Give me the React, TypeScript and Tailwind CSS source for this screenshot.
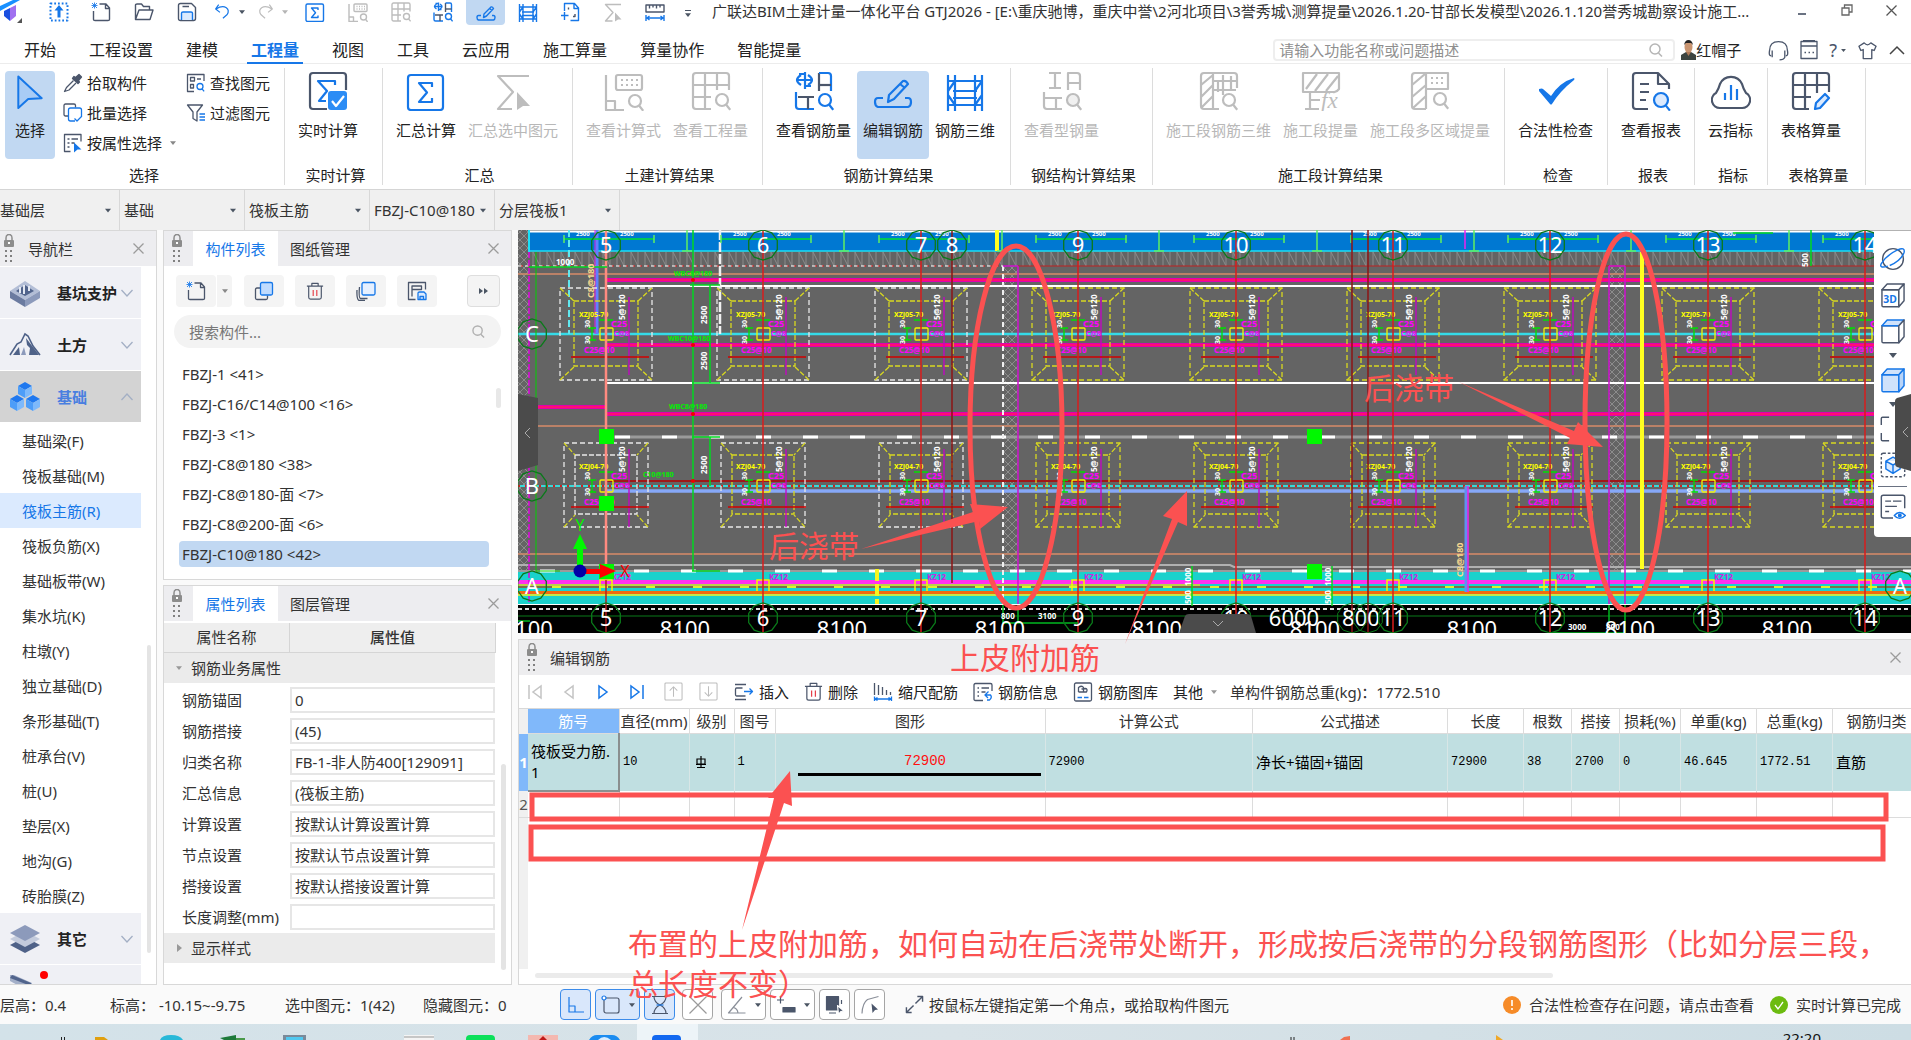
import React from "react";

const DARK = "#4b566b";
const BLUE = "#1677e8";
const GRAY = "#bdbdbd";
const RED = "#fb5151";

type IconProps = { name: string; className?: string; sw?: number; off?: boolean };

function Mag({ x, y, c, r = 6, fill = "none" }: { x: number; y: number; c: string; r?: number; fill?: string }) {
  return (
    <g stroke={c}>
      <circle cx={x} cy={y} r={r} fill={fill} />
      <path d={`M${x + r * 0.7} ${y + r * 0.8}l4 5`} />
    </g>
  );
}

function shapes(name: string, c: string, b: string): React.ReactNode {
  switch (name) {
    case "sigmaBox":
      return (
        <g stroke={b}>
          <rect x="2" y="4" width="35" height="35" rx="3" />
          <path d="M26 16v-4H13l8 9.500-8 9.500h13v-4" />
        </g>
      );
    case "realtime":
      return (
        <g>
          <path stroke={c} d="M19 38H5a3 3 0 0 1-3-3V5a3 3 0 0 1 3-3h30a3 3 0 0 1 3 3v14" />
          <path stroke={b} d="M27 14v-4H10l9 10-8 10h7" />
          <rect x="20" y="20" width="19" height="19" rx="3" fill="#2b8cf5" stroke="none" />
          <path d="M24 30l4 5 8-10" stroke="#fff" />
        </g>
      );
    case "sigmaCursor":
      return (
        <g stroke={c}>
          <path d="M36 5H5l15 16L5 38h14" />
          <path d="M24 21l13 14-7 0-6 4z" fill={c} stroke="none" />
        </g>
      );
    case "calcSearch":
      return (
        <g stroke={c}>
          <path d="M2 4v35h18M2 30h9v9" />
          <rect x="12" y="4" width="26" height="15" rx="2" />
          <path d="M17 9h17M17 14h17" strokeDasharray="2 3" />
          <Mag x={31} y={30} c={c} />
        </g>
      );
    case "gridSearch":
      return (
        <g stroke={c}>
          <path d="M20 38H5a3 3 0 0 1-3-3V5a3 3 0 0 1 3-3h30a3 3 0 0 1 3 3v14M2 14h36M2 26h18M14 2v36M26 2v17" />
          <Mag x={31} y={29} c={c} />
        </g>
      );
    case "rebarSearch":
      return (
        <g>
          <path stroke={b} d="M11 1v17M7 4q-8 5 0 10M14 4q8 5 0 10M2 9h17M5 3h5M12 15h5" />
          <path stroke={c} d="M25 20V2" />
          <path stroke={b} d="M25 2h9a3 3 0 0 1 3 3v15" />
          <path stroke={c} d="M25 14h12" />
          <path stroke={b} d="M2 21v14a3 3 0 0 0 3 3h15" />
          <path stroke={c} d="M4 26h16M14 26v12" />
          <Mag x={31} y={29} c={b} />
        </g>
      );
    case "steelSearch":
      return (
        <g stroke={c}>
          <path d="M7 2h12M7 17h12M13 2v15M26 19V2h9a3 3 0 0 1 3 3v14M26 12h12M2 21v14a3 3 0 0 0 3 3h15M2 27h18M14 27v11" />
          <Mag x={31} y={29} c={c} fill="#f0f0f0" />
        </g>
      );
    case "editRebar":
      return (
        <g stroke={b}>
          <path d="M10 27H5q-3 0-3 4t3 5h30q3-1 3-5t-3-4h-3" />
          <path d="M15 31l1-7 14-14q3-1 5 3L21 28zM27 13l5 4" />
        </g>
      );
    case "rebar3d":
      return (
        <g stroke={b}>
          <path d="M3 4v36M10 4v36M30 4v36M37 4v36M3 10h34M3 34h34M8 20h24M8 27h24M3 20l7-10M30 20l7-10M3 24l7 10M37 24l-7 10" />
        </g>
      );
    case "stage3d":
      return (
        <g stroke={c}>
          <path d="M20 38H5a3 3 0 0 1-3-3V5a3 3 0 0 1 3-3h30a3 3 0 0 1 3 3v12M14 2v36M2 14l12-10M2 26l12-12M2 37l12-12M19 9v12M32 5v14M15 10h22M15 19h22M24 4v20" />
          <Mag x={30} y={29} c={c} />
        </g>
      );
    case "stageFx":
      return (
        <g stroke={c}>
          <path d="M2 2h36v16q-3 4-6 3H2zM5 18L16 3M14 20L27 3M25 20L37 5M9 21v16M4 38h14M9 29h10" />
          <text x="20" y="37" fontSize="23" fontStyle="italic" fontFamily="Liberation Serif, serif" fill={c} stroke="none">fx</text>
        </g>
      );
    case "stageArea":
      return (
        <g stroke={c}>
          <path d="M16 38H5a3 3 0 0 1-3-3V5a3 3 0 0 1 3-3h33v16H16V2v36M2 14L15 3M2 26l14-12M3 37l13-12" />
          <path d="M21 7h14M21 12h14" strokeDasharray="2 3" />
          <Mag x={30} y={28} c={c} />
        </g>
      );
    case "check":
      return <path d="M3 18q3-1 4 0l8 7Q24 11 38 7q1 1 0 2Q24 20 16 33q-1 1-2 0L3 20z" fill={b} stroke="none" />;
    case "report":
      return (
        <g>
          <path stroke={c} d="M17 38H5a3 3 0 0 1-3-3V5a3 3 0 0 1 3-3h22l11 11v5M27 3v10h10M9 13h9M9 21h9M9 29h6" />
          <Mag x={30} y={29} c={b} r={7} fill="#dbeafe" />
        </g>
      );
    case "cloud":
      return (
        <g>
          <path stroke={c} d="M9 37a8 8 0 0 1-4-15Q8 17 9 13a12 12 0 0 1 22 0q1 4 4 9a8 8 0 0 1-4 15z" />
          <path stroke={b} d="M14 22v7M20 14v15M26 18v11" />
        </g>
      );
    case "gridPencil":
      return (
        <g>
          <path stroke={c} d="M18 38H5a3 3 0 0 1-3-3V5a3 3 0 0 1 3-3h30a3 3 0 0 1 3 3v16M2 14h36M2 26h18M14 2v36M26 2v20" />
          <path stroke={b} fill="#dbeafe" d="M24 38l1-6 9-9 4 4-9 10z" />
        </g>
      );
    case "pointer":
      return <path d="M7 4l26 24-15 1-11 10z" stroke={b} fill="#a9ccf5" />;
    case "picker":
      return (
        <g stroke={c}>
          <path d="M25 9l7-6 5 5-6 7 2 3-3 3L19 11l3-4z" fill={c} />
          <path d="M21 15L7 29l-4 8 9-3 14-14" />
        </g>
      );
    case "batch":
      return (
        <g>
          <path stroke={c} d="M10 26H5a3 3 0 0 1-3-3V5a3 3 0 0 1 3-3h17a3 3 0 0 1 3 3v4" />
          <path stroke={b} d="M24 36H15q-4 0-4-4V14q0-4 4-4h18q4 0 4 4v14M23 31l5 5 9-9" />
        </g>
      );
    case "attrSelect":
      return (
        <g>
          <path stroke={c} d="M15 37H3V3h33v14M9 12h4M17 12h13M9 20h4M17 20h6M9 28h4" />
          <path d="M22 19l15 14h-8l-7 6z" fill={b} stroke="none" />
        </g>
      );
    case "findElem":
      return (
        <g>
          <path stroke={c} d="M16 37H3V3h33v13M9 9h8v7H9zM9 23h6v7H9zM22 12h8" />
          <Mag x={28} y={27} c={b} />
        </g>
      );
    case "filter":
      return (
        <g>
          <path stroke={c} d="M3 4h30L22 18v18l-8-5V18z" />
          <path stroke={b} d="M27 22h11M27 28h11M27 34h11" />
        </g>
      );
    case "dashUp":
      return (
        <g stroke={b}>
          <rect x="3" y="3" width="34" height="34" strokeDasharray="3.5 4" strokeWidth="4" />
          <path d="M20 6l9 11h-6v14h-6V17h-6z" fill={b} stroke="none" />
        </g>
      );
    case "new":
      return (
        <g>
          <path stroke={c} d="M17 4h13l7 8v23q0 2-3 2H8q-3 0-3-2V18M29 5v8h8" />
          <path stroke={b} d="M2 2l10 10M12 2L2 12M7 1v12M1 7h12" strokeWidth="1.7" />
        </g>
      );
    case "open":
      return <path stroke={c} d="M3 35V6q0-2 3-2h9l4 5h12v7M3 35l7-19h28l-6 19z" />;
    case "save":
      return (
        <g>
          <path stroke={c} d="M3 7q0-4 4-4h22l8 8v22q0 4-4 4H7q-4 0-4-4zM11 9h13" />
          <path stroke={b} d="M9 36V22q0-2 3-2h16q3 0 3 2v14" fill="#dbeafe" />
        </g>
      );
    case "undo":
      return <path stroke={b} d="M11 4L4 14l10 8M5 14q14-9 24-3 8 6 2 16l-10 9" />;
    case "redo":
      return <path stroke={c} d="M29 4l7 10-10 8M35 14Q21 5 11 11q-8 6-2 16l10 9" />;
    case "frameAdd":
      return (
        <g stroke={b}>
          <path d="M9 18V3h20l8 9v25H21M28 3v10h9M2 27h15M9 20v16" />
          <path d="M17 15v-4M26 29h4v-5" stroke={c} />
        </g>
      );
    case "ruler":
      return (
        <g>
          <path stroke={c} d="M2 6h36v14H2zM9 6v7M16 6v5M23 6v7M30 6v5" />
          <path stroke={b} d="M2 26v12M38 26v12M4 32h32M9 28l-5 4 5 4M31 28l5 4-5 4" />
        </g>
      );
    case "copy":
      return (
        <g>
          <path stroke={c} d="M12 14H6q-3 0-3 3v17q0 3 3 3h18q3 0 3-3v-5" />
          <rect x="13" y="3" width="24" height="25" rx="3" stroke={b} fill="#bfdbfe" />
        </g>
      );
    case "layers":
      return (
        <g>
          <path stroke={c} d="M7 12q-2 22 2 23h14M2 18q-1 18 4 21h12" />
          <rect x="12" y="3" width="26" height="25" rx="3" stroke={b} fill="#e6f0ff" />
        </g>
      );
    case "trash":
      return (
        <g>
          <path stroke={c} d="M2 9h36M13 8V3h14v5M6 9v25q0 4 4 4h20q4 0 4-4V9" />
          <path stroke="#e5404a" d="M16 18v13M24 18v13" />
        </g>
      );
    case "archive":
      return (
        <g>
          <path stroke={c} d="M17 37H3V3h34v14M10 31V10h19v7H10" />
          <path stroke={b} fill="#dbeafe" d="M22 37V24q0-2 3-2h9l4 4v11zM26 37v-6h7v6" />
        </g>
      );
    case "insert":
      return (
        <g>
          <path stroke={c} d="M2 5h22M2 35h22M17 12H5q-2 0-2 3v10q0 3 2 3h18" />
          <path stroke={b} d="M20 19h17M31 13l6 6-6 6" />
        </g>
      );
    case "scale":
      return (
        <g>
          <path stroke={c} d="M3 2v24M11 6v20M19 10v16M27 16v10M35 20v6" />
          <path stroke={b} d="M3 29v9M37 29v9M4 34h32M9 31l-5 3 5 3M31 31l5 3-5 3" />
        </g>
      );
    case "info":
      return (
        <g>
          <path stroke={c} d="M20 37H5q-3 0-3-3V6q0-3 3-3h30q3 0 3 3v12M9 12h3M17 12h15M9 20h3M17 20h8M9 28h3" />
          <path stroke={b} d="M31 19l-7 7h11q4 5-2 10h-5M24 26l6 6" />
        </g>
      );
    case "library":
      return (
        <g>
          <rect x="3" y="2" width="34" height="36" rx="3" stroke={c} />
          <path stroke={c} d="M11 20V11q7-5 10 0v9M11 20h16q3-6-2-7l-8 1" />
          <path stroke={b} d="M9 31h9M22 31h9" />
        </g>
      );
    case "orbit":
      return (
        <g>
          <circle cx="20" cy="20" r="16" stroke={c} />
          <path stroke={b} d="M12 31Q-2 35 2 27 10 14 27 6q12-5 10 4-5 13-22 20" />
        </g>
      );
    case "cube":
    case "cubeTop":
    case "cubeFull":
    case "cube3d":
      return (
        <g stroke={name === "cubeFull" ? b : c}>
          <path d="M3 12h26v26H5q-2 0-2-2z" fill={name === "cubeFull" ? "#cfe2fb" : "#fff"} />
          <path d="M3 12l8-9h26l-8 9z" stroke={name === "cube3d" ? c : b} fill={name === "cube3d" ? "#fff" : "#cfe2fb"} />
          <path d="M37 3v26l-8 9V12z" fill={name === "cubeFull" ? "#b9d4f8" : "#fff"} />
          {name === "cube3d" && (
            <text x="5" y="33" fontSize="16" fontWeight="700" fill={b} stroke="none" fontFamily="Noto Sans, sans-serif">3D</text>
          )}
        </g>
      );
    case "corners":
      return <path stroke={c} d="M14 2H4q-2 0-2 2v10M2 26v10q0 2 2 2h10M26 2h10q2 0 2 2v10M38 26v10q0 2-2 2H26" />;
    case "cubeDash":
      return (
        <g>
          <rect x="2" y="2" width="36" height="36" rx="3" stroke={c} strokeDasharray="4 3" />
          <path stroke={b} fill="#dbeafe" d="M20 8l11 6v12l-11 7-11-7V14zM9 14l11 6 11-6M20 20v12" />
        </g>
      );
    case "listEye":
      return (
        <g>
          <path stroke={c} d="M20 37H5q-3 0-3-3V5q0-3 3-3h30q3 0 3 3v17M8 11h9M20 11h13M8 19h18M8 27h6" />
          <path stroke={b} d="M22 33q8-9 17 0-9 9-17 0z" />
          <circle cx="30.500" cy="33" r="2" fill={b} stroke={b} />
        </g>
      );
    case "ortho":
      return <path stroke={b} d="M6 4v30h30M6 22h12v12" />;
    case "snap":
      return (
        <g>
          <rect x="6" y="6" width="30" height="30" rx="4" stroke={c} />
          <circle cx="6" cy="6" r="4" stroke={b} fill="#fff" />
        </g>
      );
    case "hourglass":
      return (
        <g>
          <path stroke={c} d="M4 3h32M4 37h32M8 3q0 11 12 17Q8 26 8 37M32 3q0 11-12 17 12 6 12 17" />
          <path stroke={b} d="M13 20h14" />
        </g>
      );
    case "cross":
      return <path stroke="#9a9a9a" d="M3 3l34 34M37 3L3 37" />;
    case "angle":
      return (
        <g stroke="#8a8f99">
          <path d="M30 4L3 36h34M13 25q8 2 9 11" />
        </g>
      );
    case "dyn":
      return (
        <g stroke={c}>
          <path d="M2 10h14M9 3v14" />
          <rect x="14" y="25" width="24" height="9" fill={c} />
        </g>
      );
    case "select3":
      return (
        <g stroke={c}>
          <path d="M3 3h24v27H3z" fill={c} />
          <path d="M33 10v8M8 36h14" />
          <path d="M25 21l13 11-6 1-5 6z" fill={c} stroke="#fff" />
        </g>
      );
    case "poly":
      return (
        <g stroke="#8a8f99">
          <path d="M4 37Q5 16 15 9l22-6" />
          <path d="M23 17l13 12-6 1-5 6z" fill={c} stroke="none" />
        </g>
      );
    case "expand":
      return <path stroke={DARK} d="M22 18L37 3M26 3h11v11M18 22L3 37M3 26v11h11" />;
    case "headset":
      return <path stroke={c} d="M6 30Q1 30 3 20q0-17 17-17t17 17q2 10-3 10M8 20v13M32 20v13q-2 5-10 5" />;
    case "calc":
      return <path stroke={c} d="M4 3h32v34H4zM4 12h32M11 25h3M19 25h3M27 25h3M8 1h24" />;
    case "shirt":
      return <path stroke={c} d="M13 4L2 11l4 9 5-2v19h18V18l5 2 4-9-11-7q-7 8-14 0z" />;
    case "up":
      return (
        <g stroke={GRAY}>
          <rect x="2" y="2" width="36" height="36" rx="2" />
          <path d="M20 31V10M12 18l8-8 8 8" />
        </g>
      );
    case "down":
      return (
        <g stroke={GRAY}>
          <rect x="2" y="2" width="36" height="36" rx="2" />
          <path d="M20 9v21M12 22l8 8 8-8" />
        </g>
      );
    default:
      return null;
  }
}

function Icon({ name, className = "size-5", sw = 2.2, off = false }: IconProps) {
  const c = off ? GRAY : DARK;
  const b = off ? GRAY : BLUE;
  return (
    <svg viewBox="0 0 40 40" className={`${className} shrink-0`} fill="none" strokeWidth={sw} strokeLinejoin="round" aria-hidden="true">
      {shapes(name, c, b)}
    </svg>
  );
}

function Caret({ className = "w-2 h-[5px]", color = "#4b5563" }: { className?: string; color?: string }) {
  return (
    <svg viewBox="0 0 8 5" className={`${className} shrink-0`} aria-hidden="true">
      <path d="M0 0h8L4 5z" fill={color} />
    </svg>
  );
}

function CloseX({ className = "size-[11px]", color = "#9b9b9b" }: { className?: string; color?: string }) {
  return (
    <svg viewBox="0 0 11 11" className={className} stroke={color} strokeWidth="1.3" aria-hidden="true">
      <path d="M.5.5l10 10M10.500.5l-10 10" />
    </svg>
  );
}

function Chevron({ up = false, color = "#a3afc4" }: { up?: boolean; color?: string }) {
  return (
    <svg viewBox="0 0 12 8" className="h-2 w-3 shrink-0" fill="none" stroke={color} strokeWidth="1.3" aria-hidden="true">
      <path d={up ? "M.5 7L6 1l5.500 6" : "M.5 1L6 7l5.500-6"} />
    </svg>
  );
}

function Grip() {
  return (
    <svg viewBox="0 0 12 30" className="h-[30px] w-3 shrink-0" aria-hidden="true">
      <path d="M3 7V4q0-3.500 3-3.500T9 4v3" fill="none" stroke="#8c8c8c" strokeWidth="1.500" />
      <rect x="1" y="6" width="10" height="7" rx="1" fill="#8c8c8c" />
      <rect x="5" y="8" width="2" height="2" fill="#fff" />
      {[16, 21, 26].map((y) => (
        <g key={y} fill="#808080">
          <rect x="2" y={y} width="2" height="2" />
          <rect x="7" y={y} width="2" height="2" />
        </g>
      ))}
    </svg>
  );
}

/* ---------- title bar ---------- */

const quick: { n: string; off?: boolean; w: string; active?: boolean; caret?: boolean }[] = [
  { n: "dashUp", w: "w-[42px]" },
  { n: "new", w: "w-[42px]" },
  { n: "open", w: "w-[43px]" },
  { n: "save", w: "w-[43px]" },
  { n: "undo", w: "w-[43px]", caret: true },
  { n: "redo", w: "w-[43px]", off: true, caret: true },
  { n: "sigmaBox", w: "w-[42px]" },
  { n: "calcSearch", w: "w-[43px]", off: true },
  { n: "gridSearch", w: "w-[43px]", off: true },
  { n: "rebarSearch", w: "w-[42px]" },
  { n: "editRebar", w: "w-[43px]", active: true },
  { n: "rebar3d", w: "w-[42px]" },
  { n: "frameAdd", w: "w-[42px]" },
  { n: "sigmaCursor", w: "w-[43px]", off: true },
  { n: "ruler", w: "w-[42px]" },
];

function TitleBar() {
  return (
    <header className="flex h-[25px] shrink-0 items-start overflow-hidden">
      <svg viewBox="0 0 24 25" className="mr-[14px] h-[25px] w-6 shrink-0" aria-hidden="true">
        <path d="M0 6L13 0h7L0 11z" fill="#1890ff" />
        <path d="M4 11l6-3v13l-6-5z" fill="#1a4fe0" />
        <path d="M10 8l6-3v11l-6 5z" fill="#a070f0" />
        <path d="M22 18v5h-5z" fill="#555" />
      </svg>
      {quick.map((q) => (
        <div key={q.n} className={`${q.w} flex h-[25px] shrink-0 justify-center`}>
          <button
            aria-label={q.n}
            className={`flex h-[25px] w-[39px] items-center justify-center gap-2 rounded-b pb-0.5 ${q.active ? "bg-[#c1d8f2]" : ""}`}
          >
            <Icon name={q.n} off={q.off} sw={2.8} className={q.caret ? "size-[17px]" : "size-5"} />
            {q.caret && <Caret className="h-1 w-1.5" color={q.off ? "#b5b5b5" : "#4b5563"} />}
          </button>
        </div>
      ))}
      <button aria-label="更多" className="mt-2.5 ml-1 flex w-4 flex-col items-center gap-0.5">
        <span className="h-px w-1.5 bg-gray-600" />
        <Caret className="h-1 w-1.5" />
      </button>
      <h1 className="ml-4 min-w-0 flex-1 truncate leading-[22px] text-[#333]">
        广联达BIM土建计量一体化平台 GTJ2026 - [E:\重庆驰博，重庆中誉\2河北项目\3誉秀城\测算提量\2026.1.20-甘部长发模型\2026.1.120誉秀城勘察设计施工...
      </h1>
      <div className="ml-4 flex shrink-0 items-center gap-[33px] pt-1 pr-[14px]">
        <button aria-label="最小化" className="flex h-3 w-3 items-end justify-center pb-px">
          <span className="h-0.5 w-2 bg-gray-500" />
        </button>
        <button aria-label="还原">
          <svg viewBox="0 0 12 12" className="size-3" fill="none" stroke="#666" strokeWidth="1.300" aria-hidden="true">
            <path d="M3.500 3.500V1H11v7H8.500M1 4h7v7H1z" />
          </svg>
        </button>
        <button aria-label="关闭">
          <CloseX color="#555" />
        </button>
      </div>
    </header>
  );
}

const menu = ["开始", "工程设置", "建模", "工程量", "视图", "工具", "云应用", "施工算量", "算量协作", "智能提量"];

function MenuRow() {
  return (
    <div className="flex h-[39px] shrink-0 items-end justify-between border-b border-[#ececec]">
      <nav className="flex gap-[25px] pl-5">
        {menu.map((m) => (
          <button
            key={m}
            className={`-mb-px h-[30px] border-b-2 px-1 pt-1 text-base leading-6 ${m === "工程量" ? "border-[#1677e8] font-bold text-[#1677e8]" : "border-transparent text-[#222]"}`}
          >
            {m}
          </button>
        ))}
      </nav>
      <div className="flex h-[30px] items-center pt-1 pr-1.5">
        <label className="flex h-[22px] w-[402px] items-center justify-between rounded-sm border-2 border-[#eeeeee] pr-2.5 pl-1">
          <input aria-label="功能搜索" placeholder="请输入功能名称或问题描述" className="w-full outline-none placeholder:text-[#8f8f8f]" />
          <svg viewBox="0 0 14 14" className="size-[14px] shrink-0" fill="none" stroke="#b5b5b5" strokeWidth="1.500" aria-hidden="true">
            <circle cx="6" cy="6" r="5" />
            <path d="M9.500 10l3.500 3.500" />
          </svg>
        </label>
        <svg viewBox="0 0 15 20" className="ml-1.5 h-5 w-[15px]" aria-hidden="true">
          <path d="M0 20v-5l5-3h5l5 3v5z" fill="#3d4440" />
          <ellipse cx="7.500" cy="7" rx="4" ry="6" fill="#c99470" />
          <path d="M3 5Q4 0 7.500 0T12 5L10 3H5z" fill="#222" />
          <path d="M5 12h5l-2.500 4z" fill="#b07a58" />
        </svg>
        <span className="text-[#222]">红帽子</span>
        <button aria-label="客服" className="ml-[27px]"><Icon name="headset" className="size-[21px]" sw={2.5} /></button>
        <button aria-label="计算器" className="ml-[10px]"><Icon name="calc" className="size-5" sw={2.6} /></button>
        <button aria-label="帮助" className="ml-[10px] flex items-center gap-1 text-lg text-[#4b566b]">?<Caret className="h-[3px] w-[5px]" /></button>
        <button aria-label="换肤" className="ml-[12px]"><Icon name="shirt" className="size-[19px]" sw={2.8} /></button>
        <button aria-label="收起" className="ml-3">
          <svg viewBox="0 0 16 10" className="h-2.5 w-4" fill="none" stroke="#444" strokeWidth="1.500" aria-hidden="true"><path d="M1 9l7-7 7 7" /></svg>
        </button>
      </div>
    </div>
  );
}

/* ---------- ribbon ---------- */

type Big = { n: string; t: string; off?: boolean; active?: boolean };
const groups: { title: string; w: string; items: Big[] }[] = [
  { title: "实时计算", w: "w-[98px]", items: [{ n: "realtime", t: "实时计算" }] },
  { title: "汇总", w: "w-[190px]", items: [{ n: "sigmaBox", t: "汇总计算" }, { n: "sigmaCursor", t: "汇总选中图元", off: true }] },
  { title: "土建计算结果", w: "w-[190px]", items: [{ n: "calcSearch", t: "查看计算式", off: true }, { n: "gridSearch", t: "查看工程量", off: true }] },
  { title: "钢筋计算结果", w: "w-[248px]", items: [{ n: "rebarSearch", t: "查看钢筋量" }, { n: "editRebar", t: "编辑钢筋", active: true }, { n: "rebar3d", t: "钢筋三维" }] },
  { title: "钢结构计算结果", w: "w-[142px]", items: [{ n: "steelSearch", t: "查看型钢量", off: true }] },
  { title: "施工段计算结果", w: "w-[352px]", items: [{ n: "stage3d", t: "施工段钢筋三维", off: true }, { n: "stageFx", t: "施工段提量", off: true }, { n: "stageArea", t: "施工段多区域提量", off: true }] },
  { title: "检查", w: "w-[103px]", items: [{ n: "check", t: "合法性检查" }] },
  { title: "报表", w: "w-[87px]", items: [{ n: "report", t: "查看报表" }] },
  { title: "指标", w: "w-[73px]", items: [{ n: "cloud", t: "云指标" }] },
  { title: "表格算量", w: "w-[98px]", items: [{ n: "gridPencil", t: "表格算量" }] },
];

function SmallBtn({ n, t, caret }: { n: string; t: string; caret?: boolean }) {
  return (
    <button className="flex h-[30px] items-center gap-1 text-[#222]">
      <Icon name={n} className="size-5" sw={2.6} />
      {t}
      {caret && <Caret className="ml-1 h-1 w-1.5" color="#888" />}
    </button>
  );
}

function Ribbon() {
  return (
    <section className="flex h-[126px] shrink-0 overflow-hidden border-b border-[#d5d5d5] py-1">
      <div className="flex w-[285px] shrink-0 flex-col border-r border-[#dcdcdc]">
        <div className="flex h-[91px]">
          <button className="mt-[3px] ml-[5px] flex h-[88px] w-[50px] flex-col items-center rounded bg-[#c1d8f2] pt-0.5 text-[#222]">
            <Icon name="pointer" className="size-9" />
            <span className="mt-[11px] leading-5">选择</span>
          </button>
          <div className="ml-2 flex flex-col">
            <SmallBtn n="picker" t="拾取构件" />
            <SmallBtn n="batch" t="批量选择" />
            <SmallBtn n="attrSelect" t="按属性选择" caret />
          </div>
          <div className="ml-2.5 flex flex-col">
            <SmallBtn n="findElem" t="查找图元" />
            <SmallBtn n="filter" t="过滤图元" />
          </div>
        </div>
        <span className="mt-1.5 pl-1 text-center leading-5 text-[#222]">选择</span>
      </div>
      {groups.map((g) => (
        <div key={g.title} className={`${g.w} flex shrink-0 flex-col border-r border-[#dcdcdc] pt-[3px]`}>
          <div className="flex pl-[7px]">
            {g.items.map((it) => (
              <button
                key={it.t}
                disabled={it.off}
                className={`flex h-[88px] shrink-0 flex-col items-center rounded px-1.5 whitespace-nowrap ${it.active ? "bg-[#c1d8f2]" : ""} ${it.off ? "text-[#b8b8b8]" : "text-[#222]"}`}
              >
                <Icon name={it.n} off={it.off} className="size-10" />
                <span className="mt-[9px] leading-5">{it.t}</span>
              </button>
            ))}
          </div>
          <span className="mt-1.5 pl-1 text-center leading-5 text-[#222]">{g.title}</span>
        </div>
      ))}
    </section>
  );
}

function SelectorBar() {
  const items = ["基础层", "基础", "筏板主筋", "FBZJ-C10@180", "分层筏板1"];
  return (
    <section className="flex h-10 shrink-0 bg-[#f0f0f0]">
      {items.map((t, i) => (
        <div key={t} className={`relative border-r border-[#d8d8d8] ${i === 0 ? "w-[120px]" : "w-[125px]"}`}>
          <select aria-label={t} className={`h-full w-full appearance-none truncate bg-transparent pr-4 text-[#333] outline-none ${i === 0 ? "pl-0" : "pl-1"}`}>
            <option>{t}</option>
          </select>
          <span className="pointer-events-none absolute top-[18px] right-2">
            <Caret className="h-[5px] w-1.5" />
          </span>
        </div>
      ))}
    </section>
  );
}

/* ---------- navigation ---------- */

function NavHead({ t, icon, open }: { t: string; icon: React.ReactNode; open?: boolean }) {
  return (
    <button className={`mb-px flex h-[51px] w-[141px] shrink-0 items-center pl-[9px] font-bold ${open ? "bg-[#d3d3d3] text-[#4a7fe0]" : "bg-[#eff0f5] text-[#222]"}`}>
      <svg viewBox="0 0 32 32" className="mr-4 size-8 shrink-0" aria-hidden="true">{icon}</svg>
      <span className="w-16 text-left">{t}</span>
      <Chevron up={open} />
    </button>
  );
}

function Cube({ x, y }: { x: number; y: number }) {
  return (
    <g transform={`translate(${x} ${y})`}>
      <path d="M7 0l7 4-7 4-7-4z" fill="#1f78ef" />
      <path d="M0 4l7 4v8l-7-4z" fill="#4d9df8" />
      <path d="M14 4L7 8v8l7-4z" fill="#7db9fb" />
    </g>
  );
}

const subs = ["基础梁(F)", "筏板基础(M)", "筏板主筋(R)", "筏板负筋(X)", "基础板带(W)", "集水坑(K)", "柱墩(Y)", "独立基础(D)", "条形基础(T)", "桩承台(V)", "桩(U)", "垫层(X)", "地沟(G)", "砖胎膜(Z)"];

function NavPanel() {
  return (
    <aside className="relative flex w-[157px] shrink-0 flex-col overflow-hidden border-t border-r border-b border-[#d8d8d8] bg-white">
      <div className="mb-px flex h-[35px] shrink-0 items-center bg-[#ededf0] pl-[3px]">
        <Grip />
        <span className="ml-[13px] flex-1 text-[#333]">导航栏</span>
        <button aria-label="关闭导航栏" className="mr-3"><CloseX /></button>
      </div>
      <NavHead
        t="基坑支护"
        icon={
          <g>
            <path d="M1 14L16 4l15 10-15 9z" fill="#b3bed6" />
            <path d="M1 14l15 9v7L1 21z" fill="#6b7ba0" />
            <path d="M31 14l-15 9v7l15-9z" fill="#8c9abb" />
            <path d="M7 14l9-6 9 6-9 5z" fill="#51648c" />
            <path d="M11 10v6M15 8v9M20 9v5" stroke="#e3e8f2" strokeWidth="2" />
          </g>
        }
      />
      <NavHead
        t="土方"
        icon={
          <g>
            <path d="M1 26L8 15l4-2 4-8 3 2 5 10 7 9" fill="none" stroke="#4f6288" strokeWidth="1.600" />
            <path d="M17 9l1 7 3 3-1 7h10z" fill="#4f6288" />
            <path d="M10 18l-6 8h7z" fill="#4f6288" />
            <path d="M15 18l-3 8h5z" fill="#8c9abb" />
          </g>
        }
      />
      <NavHead t="基础" open icon={<g><Cube x={9} y={1} /><Cube x={1} y={14} /><Cube x={17} y={14} /></g>} />
      <ul className="shrink-0">
        {subs.map((s) => (
          <li key={s}>
            <a href="#" className={`flex h-[35px] w-[141px] items-center pl-[22px] ${s === "筏板主筋(R)" ? "bg-[#dbeafe] text-[#1677e8]" : "text-[#333]"}`}>{s}</a>
          </li>
        ))}
      </ul>
      <NavHead
        t="其它"
        icon={
          <g>
            <path d="M1 22l15-8 15 8-15 8z" fill="#4f6288" />
            <path d="M1 16l15-8 15 8-15 8z" fill="#c3cbdc" />
            <path d="M1 10l15-8 15 8-15 8z" fill="#8c9abb" />
          </g>
        }
      />
      <div className="relative h-[19px] w-[141px] shrink-0 overflow-hidden bg-[#eff0f5]">
        <svg viewBox="0 0 32 32" className="ml-[9px] size-8" aria-hidden="true">
          <path d="M1 10l4 0 18 8v5H14L1 16z" fill="#a3afc8" />
          <path d="M3 10l19 8v3L1 13z" fill="#51648c" />
        </svg>
        <span className="absolute top-[6px] left-10 size-2 rounded-full bg-[#ff0000]" />
      </div>
      <span className="absolute top-[414px] right-[5px] h-[308px] w-1 rounded-full bg-[#e4e4e4]" />
    </aside>
  );
}

/* ---------- middle panels ---------- */

function PanelTabs({ a, b }: { a: string; b: string }) {
  return (
    <div className="flex h-[35px] shrink-0 items-center bg-[#ededf0] pl-[7px]">
      <Grip />
      <button className="ml-2.5 h-full w-[85px] bg-white text-[#1677e8]">{a}</button>
      <button className="ml-3 text-[#333]">{b}</button>
      <button aria-label={`关闭${a}`} className="mr-3 ml-auto"><CloseX /></button>
    </div>
  );
}

const comps = ["FBZJ-1 <41>", "FBZJ-C16/C14@100 <16>", "FBZJ-3 <1>", "FBZJ-C8@180 <38>", "FBZJ-C8@180-面 <7>", "FBZJ-C8@200-面 <6>", "FBZJ-C10@180 <42>"];

function ComponentPanel() {
  const tb = "flex h-8 w-10 items-center justify-center rounded bg-[#f4f4f4]";
  return (
    <section className="relative flex h-[350px] shrink-0 flex-col border border-[#d8d8d8] bg-white">
      <PanelTabs a="构件列表" b="图纸管理" />
      <div className="mt-[9px] flex pr-[11px] pl-3">
        <button aria-label="新建" className={tb}><Icon name="new" sw={2.6} /></button>
        <button aria-label="新建选项" className="ml-px flex h-8 w-[15px] items-center justify-center rounded-r bg-[#f4f4f4]"><Caret className="h-1 w-1.5" color="#888" /></button>
        <button aria-label="复制" className={`${tb} ml-3`}><Icon name="copy" sw={2.6} /></button>
        <button aria-label="删除" className={`${tb} ml-[11px]`}><Icon name="trash" sw={2.6} className="size-[18px]" /></button>
        <button aria-label="层间复制" className={`${tb} ml-[11px]`}><Icon name="layers" sw={2.6} /></button>
        <button aria-label="存档" className={`${tb} ml-[11px]`}><Icon name="archive" sw={2.6} /></button>
        <button aria-label="展开" className="ml-auto flex h-8 w-[33px] items-center justify-center rounded border border-[#dedede] bg-[#f4f4f4]">
          <svg viewBox="0 0 10 6" className="h-1.5 w-2.5" fill="#4b5563" aria-hidden="true"><path d="M0 0l4 3-4 3zM5 0l4 3-4 3z" /></svg>
        </button>
      </div>
      <label className="mt-2 mr-2.5 ml-2.5 flex h-[33px] items-center rounded-full bg-[#f3f3f3] pr-4 pl-[15px]">
        <input aria-label="搜索构件" placeholder="搜索构件..." className="w-full bg-transparent outline-none placeholder:text-[#777]" />
        <svg viewBox="0 0 14 14" className="size-[13px] shrink-0" fill="none" stroke="#b0b0b0" strokeWidth="1.500" aria-hidden="true">
          <circle cx="6" cy="6" r="5" />
          <path d="M9.500 10l3.500 3.500" />
        </svg>
      </label>
      <ul className="mt-[11px] mr-[22px] ml-[15px]">
        {comps.map((c) => (
          <li key={c} className="flex h-[30px] items-center">
            <span className={`flex h-[26px] w-full items-center rounded pl-[3px] text-[#333] ${c === "FBZJ-C10@180 <42>" ? "bg-[#c1d8f2]" : ""}`}>{c}</span>
          </li>
        ))}
      </ul>
      <span className="absolute top-[157px] right-2.5 h-5 w-[5px] rounded-full bg-[#e8e8e8]" />
    </section>
  );
}

const props: [string, string][] = [
  ["钢筋锚固", "0"],
  ["钢筋搭接", "(45)"],
  ["归类名称", "FB-1-非人防400[129091]"],
  ["汇总信息", "(筏板主筋)"],
  ["计算设置", "按默认计算设置计算"],
  ["节点设置", "按默认节点设置计算"],
  ["搭接设置", "按默认搭接设置计算"],
  ["长度调整(mm)", ""],
];

function PropertyPanel() {
  return (
    <section className="relative flex min-h-0 flex-1 flex-col overflow-hidden border border-[#d8d8d8] bg-white text-[#333]">
      <PanelTabs a="属性列表" b="图层管理" />
      <div className="mt-0.5 mr-[15px] flex h-[30px] shrink-0 border-r border-b border-[#d5d5d5] bg-[#eeeeee] leading-[29px]">
        <span className="w-[126px] border-r border-[#d5d5d5] text-center">属性名称</span>
        <span className="flex-1 text-center font-medium">属性值</span>
      </div>
      <div className="mr-4 flex h-[30px] shrink-0 items-center bg-[#ebebeb] pl-3">
        <Caret className="mr-[9px] h-1 w-1.5" color="#999" />
        钢筋业务属性
      </div>
      <div className="mt-px mr-4">
        {props.map(([k, v]) => (
          <label key={k} className="flex h-[31px] items-center pl-[18px]">
            <span className="w-[108px] shrink-0">{k}</span>
            <input defaultValue={v} className="h-[26px] w-full min-w-0 border-2 border-[#e6e6e6] pl-[3px] outline-none" />
          </label>
        ))}
      </div>
      <div className="mt-px mr-4 flex h-[30px] shrink-0 items-center bg-[#ebebeb] pl-[13px]">
        <svg viewBox="0 0 5 8" className="mr-[9px] h-2 w-[5px]" fill="#999" aria-hidden="true"><path d="M0 0l5 4-5 4z" /></svg>
        显示样式
      </div>
      <span className="absolute top-[178px] right-[5px] h-[206px] w-[5px] rounded-full bg-[#e4e4e4]" />
    </section>
  );
}

/* ---------- drawing ---------- */

const axes: [string, number][] = [["5", 606], ["6", 763], ["7", 921], ["9", 1078], ["10", 1236], ["11", 1393], ["12", 1550], ["13", 1708], ["14", 1865]];

function ring(x: number, y: number) {
  return Array.from({ length: 10 }, (_, i) => {
    const a = (i * Math.PI) / 5 + Math.PI / 10;
    return `${(x + 15 * Math.cos(a)).toFixed(1)},${(y + 15 * Math.sin(a)).toFixed(1)}`;
  }).join(" ");
}

function Bubble({ x, y, t }: { x: number; y: number; t: string }) {
  return (
    <g>
      <polygon points={ring(x, y)} fill="none" stroke="#0a7a1a" strokeWidth="1.3" />
      <text x={x} y={y + 8} fontSize="22" textAnchor="middle" fill="#fff">{t}</text>
    </g>
  );
}

function Footing({ x, top, lower, white, inner }: { x: number; top: number; lower?: boolean; white?: boolean; inner?: boolean }) {
  const o = lower ? 42 : 46;
  const h = lower ? 84 : 92;
  const n = lower ? 31 : 32;
  const k = lower ? 12 : 13;
  const c = white ? "#e8e8e8" : "#d8d820";
  const cy = lower ? 486 : 334;
  return (
    <g fill="none" strokeWidth="1.3">
      <rect x={x - o} y={top} width={o * 2} height={h} stroke={c} strokeDasharray="5 3" />
      <rect x={x - n} y={top + k} width={n * 2} height={h - 2 * k - 1} stroke={inner ? "#e8e8e8" : "#d8d820"} strokeDasharray="5 2" />
      <path d={`M${x - o} ${top}L${x - n} ${top + k}M${x + o} ${top}L${x + n} ${top + k}M${x - o} ${top + h}L${x - n} ${top + h - k}M${x + o} ${top + h}L${x + n} ${top + h - k}`} stroke="#d8d820" strokeDasharray="5 2" />
      <rect x={x - 6} y={cy - 6} width="13" height="12" rx="1" stroke="#f5f500" />
      <path d={`M${x + 23} ${cy - 37}v78`} stroke="#c800c8" />
      <path d={`M${x - 35} ${cy + 23 - (lower ? 2 : 0)}h78`} stroke="#d00000" />
      <path d={`M${x - 14} ${cy - 6}v12M${x - 18} ${cy - 6}h8M${x - 18} ${cy + 6}h8M${x - 7} ${cy - 14}h14`} stroke="#00e000" />
      <g stroke="none" fontWeight="700">
        <text x={x - 27} y={cy - 17} fontSize="7" fill="#ff0">{lower ? "XZJ04-70" : "XZJ05-70"}</text>
        <text x={x - 22} y={cy + 19} fontSize="8" fill="#f0f">C25@10</text>
        <text x={x + 5} y={cy - 7} fontSize="9" fill="#f0f">C25</text>
        <text x={x + 8} y={cy + 2} fontSize="7" fill="#f0f">C@8</text>
        <text transform={`translate(${x + 19} ${cy - 14}) rotate(-90)`} fontSize="8" fill="#fff">5@120</text>
        <text transform={`translate(${x - 16} ${cy - 6}) rotate(-90)`} fontSize="7" fill="#fff">30</text>
        <text transform={`translate(${x - 16} ${cy + 10}) rotate(-90)`} fontSize="7" fill="#fff">30</text>
      </g>
    </g>
  );
}

function Drawing() {
  return (
    <svg viewBox="518 230 1393 403" preserveAspectRatio="xMinYMin slice" className="block h-full w-full bg-[#646464] font-['Noto_Sans',sans-serif]" aria-label="基础平面图">
      <defs>
        <pattern id="net" width="8" height="8" patternUnits="userSpaceOnUse">
          <path d="M0 0l8 8M8 0l-8 8" stroke="#8c8c8c" strokeWidth="1" />
        </pattern>
        <pattern id="slash" width="14" height="14" patternUnits="userSpaceOnUse" y="252">
          <path d="M1 0v14M1 0l7 14M8 0v14" stroke="#8a8a8a" strokeWidth="1" fill="none" />
        </pattern>
      </defs>
      <rect x="518" y="230" width="11" height="375" fill="url(#net)" />
      <rect x="529" y="232" width="1382" height="19" fill="#0078d2" />
      <rect x="529" y="252" width="1382" height="14" fill="url(#slash)" />
      <rect x="1003" y="266" width="15" height="338" fill="url(#net)" />
      <rect x="1609" y="266" width="16" height="338" fill="url(#net)" />
      <g fill="none">
        <path d="M529 231.500H1911" stroke="#fff" strokeWidth="2" />
        <path d="M529 251H1911" stroke="#18e0f8" strokeWidth="1.500" />
        <path d="M518 266H1003" stroke="#fff" strokeDasharray="4 3" />
        <path d="M521 266H1003" stroke="#e02020" strokeDasharray="2 5" />
        <path d="M1018 266H1911" stroke="#c02020" />
        <path d="M518 274H1911M518 426H1911M518 554H1911" stroke="#d88a68" strokeWidth="1.500" />
        <path d="M606 280H1911M606 414H1911M606 345H1911M538 407H606" stroke="#e000b0" strokeWidth="4" />
        <path d="M606 280H1911M606 414H1911M606 345H1911M538 407H606" stroke="#ff1070" strokeWidth="2" />
        <path d="M606 286H1911M606 383H1911" stroke="#fff" strokeWidth="2" />
        <path d="M518 334H1911" stroke="#35dbe8" strokeWidth="2.500" />
        <path d="M606 437H1911" stroke="#9a9a9a" strokeWidth="3" />
        <path d="M615 437H1911" stroke="#fff" strokeWidth="3" strokeDasharray="15 32" />
        <path d="M606 481H1911" stroke="#a01818" strokeWidth="2" />
        <path d="M518 486H1911" stroke="#38d8d8" strokeWidth="2" />
        <path d="M518 486H1911" stroke="#d02020" strokeWidth="2" strokeDasharray="2 5" />
        <path d="M606 491H1911" stroke="#86a8f8" strokeWidth="3.500" />
        <path d="M518 565H1230l4 2H1911" stroke="#b0b0b0" strokeWidth="2" />
      </g>
      <rect x="518" y="572" width="1393" height="33" fill="#1ad1cc" />
      <g fill="none">
        <path d="M518 571H1911" stroke="#9a9a9a" strokeWidth="2" />
        <path d="M540 571H1911" stroke="#fff" strokeWidth="3" strokeDasharray="15 32" />
        <path d="M518 582H1911" stroke="#ff30f0" strokeWidth="4" />
        <path d="M518 585H1200" stroke="#f0d020" strokeWidth="1.500" />
        <path d="M518 587H1911" stroke="#a04820" strokeWidth="1.500" />
        <path d="M552 587H1911" stroke="#e0f030" strokeWidth="2" strokeDasharray="9 38" />
        <path d="M518 592.500H1911" stroke="#f06a10" strokeWidth="3" />
        <path d="M518 595H1911" stroke="#f8f020" strokeWidth="1.500" />
        <path d="M529 252V604" stroke="#e000e0" strokeWidth="1.500" strokeDasharray="6 2" />
        <path d="M529 230V252" stroke="#18e0f8" strokeWidth="2" />
        <path d="M536 252V571H560" stroke="#00d000" />
        <path d="M569 230V334" stroke="#60e8f0" strokeWidth="2" strokeDasharray="7 3" />
        <path d="M597 230V334" stroke="#6080ff" strokeWidth="3" />
        <path d="M595 230V334" stroke="#e020e0" />
        <path d="M720 230V334" stroke="#f0f0f0" strokeWidth="2.500" strokeDasharray="10 2" />
        <path d="M1466 486V592" stroke="#6090f0" strokeWidth="3" />
        <path d="M1468 486V592M1465 230V249" stroke="#f020f0" strokeWidth="1.500" />
        <path d="M997 230v21M1642 252V569" stroke="#ffff20" strokeWidth="4" />
        <path d="M877 569V604" stroke="#f5f520" strokeWidth="4" strokeDasharray="12 3" />
        <path d="M1003 266V604" stroke="#f0f0f0" strokeWidth="2" strokeDasharray="5 3" />
        <path d="M1018 266V604M1609 266V604M1625 266V604M1003 266h15M1609 266h16" stroke="#d010d0" strokeWidth="1.500" />
      </g>
      <rect x="518" y="605" width="1393" height="28" fill="#000" />
      <path d="M518 604.500H1911" stroke="#fff" />
      <path d="M518 609H1911" stroke="#ddd" strokeWidth="2" strokeDasharray="4 3" />
      <path d="M518 616H1911" stroke="#0a7a1a" />
      {axes.map(([t, x], i) => (
        <g key={t}>
          <Footing x={x} top={288} white={i < 3} />
          <Footing x={x} top={443} lower white={i < 3} inner={i === 0} />
          <text x={x + 6} y="580" fontSize="8" fontWeight="700" fill="#d020e0">KZ12</text>
          <path d={`M${x - 6} 591V580h12v11`} fill="none" stroke="#f5f500" strokeWidth="1.500" />
          <path d={`M${x - 42} 239h90`} stroke="#00e030" strokeWidth="1.500" />
          <path d={`M${x - 42} 235v8M${x + 48} 235v8M${x + 81} 230v21M${x + 76} 251h10`} stroke="#60f060" strokeWidth="1.500" />
          <text x={x - 30} y="236" fontSize="6" fontWeight="700" fill="#fff">2500</text>
          <text x={x + 14} y="236" fontSize="6" fontWeight="700" fill="#fff">2500</text>
        </g>
      ))}
      <g fill="none" strokeWidth="1.500">
        <path d="M763 230V633M921 230V633M1078 230V633M1236 230V633M1393 230V633M1550 230V633M1708 230V633M1865 230V633" stroke="#d81c1c" />
        <path d="M952 230V583M1352 230V633M1368 230V633" stroke="#8c1414" />
        <path d="M606 230V580" stroke="#ff8a80" strokeWidth="2.500" />
        <path d="M606 580V633" stroke="#b02020" />
        <path d="M693 230V571M710 285V383M710 437V486M690 285h30M692 383h28M692 437h28M692 571h28M529 267h78M1733 233h40M1811 230v36M1192 566v40M1332 566v40" stroke="#00d820" />
        <path d="M1002 623h76M1003 605v18M1018 605v18M1550 633h75M1609 605v18M1625 605v28M518 621h12" stroke="#00b820" />
      </g>
      <g fill="#f00000">
        <circle cx="693" cy="280" r="2" />
        <circle cx="693" cy="345" r="2" />
        <circle cx="693" cy="414" r="2" />
        <circle cx="693" cy="481" r="2" />
      </g>
      <g fill="#00f000" fontSize="7" fontWeight="700">
        <text x="674" y="276">WBC8@180</text>
        <text x="668" y="341">WBC10@180</text>
        <text x="669" y="409">WBC8@180</text>
        <text x="643" y="477">C10@180</text>
      </g>
      <g fill="#fff" fontSize="8" fontWeight="700">
        <text x="556" y="265">1000</text>
        <text transform="translate(707 324) rotate(-90)">2500</text>
        <text transform="translate(707 370) rotate(-90)">2500</text>
        <text transform="translate(707 474) rotate(-90)">2500</text>
        <text transform="translate(1191 586) rotate(-90)">1000</text>
        <text transform="translate(1191 604) rotate(-90)">500</text>
        <text transform="translate(1331 586) rotate(-90)">1000</text>
        <text transform="translate(1331 604) rotate(-90)">500</text>
        <text transform="translate(1808 267) rotate(-90)">500</text>
        <text x="1001" y="619">800</text>
        <text x="1038" y="619">3100</text>
        <text x="1568" y="630">3000</text>
        <text x="1606" y="630">800</text>
      </g>
      <g fill="#f5d890" fontSize="9" fontWeight="700">
        <text transform="translate(594 298) rotate(-90)">C8@180</text>
        <text transform="translate(1463 577) rotate(-90)">C8@180</text>
      </g>
      <g fill="#fff" fontSize="22" textAnchor="middle">
        <text x="534" y="637">100</text>
        {[685, 842, 1000, 1157, 1315, 1472, 1630, 1787].map((x) => (
          <text key={x} x={x} y="637">8100</text>
        ))}
        <text x="1294" y="626">6000</text>
        <text x="1361" y="626">800</text>
      </g>
      {axes.map(([t, x]) => (
        <g key={t}>
          <Bubble x={x} y={245} t={t} />
          <Bubble x={x} y={618} t={t} />
        </g>
      ))}
      <Bubble x={952} y={245} t="8" />
      <polygon points={ring(1352, 618)} fill="none" stroke="#0a7a1a" />
      <polygon points={ring(1368, 618)} fill="none" stroke="#0a7a1a" />
      <Bubble x={532} y={334} t="C" />
      <Bubble x={532} y={486} t="B" />
      <Bubble x={532} y={586} t="A" />
      <Bubble x={1900} y={586} t="A" />
      <g fill="#00f800">
        <rect x="599" y="429" width="15" height="15" />
        <rect x="599" y="496" width="15" height="15" />
        <rect x="599" y="564" width="15" height="15" />
        <rect x="1307" y="429" width="15" height="15" />
        <rect x="1307" y="564" width="15" height="15" />
        <rect x="577" y="545" width="6" height="22" />
        <path d="M580 534l7 15h-14z" />
      </g>
      <rect x="585" y="569" width="18" height="5" fill="#f00" />
      <path d="M616 571l-16-7v14z" fill="#f00" />
      <circle cx="580" cy="571" r="6.500" fill="#0000a8" />
      <text x="580" y="531" fontSize="16" textAnchor="middle" fill="#00f000">Y</text>
      <text x="625" y="577" fontSize="16" textAnchor="middle" fill="#f00">X</text>
      <path d="M518 394l20 4v67l-20 6z" fill="#4b4b4b" />
      <path d="M530 428l-5 5 5 5" fill="none" stroke="#aaa" />
      <path d="M1179 633l6-17q1-2 4-2h58q3 0 4 2l5 17z" fill="#4b4b4b" />
      <path d="M1213 621l5 5 5-5" fill="none" stroke="#aaa" />
    </svg>
  );
}

function ViewTools() {
  return (
    <div className="absolute top-px right-0 flex w-[37px] flex-col items-center rounded-bl bg-white pt-[15px] pb-[17px]">
      <button aria-label="动态观察"><Icon name="orbit" className="block size-[26px]" /></button>
      <button aria-label="三维" className="mt-2.5"><Icon name="cube3d" className="block size-[26px]" /></button>
      <button aria-label="俯视" className="mt-2.5"><Icon name="cubeTop" className="block size-[26px]" /></button>
      <span className="flex h-[23px] items-center"><Caret /></span>
      <button aria-label="实体"><Icon name="cubeFull" className="block size-[26px]" /></button>
      <span className="flex h-[23px] items-center"><Caret /></span>
      <button aria-label="全屏"><Icon name="corners" className="block size-[26px]" /></button>
      <button aria-label="局部三维" className="mt-2.5"><Icon name="cubeDash" className="block size-[26px]" /></button>
      <span className="mt-2 mb-[7px] h-px w-[29px] bg-gray-500" />
      <button aria-label="显示设置"><Icon name="listEye" className="block size-[26px]" /></button>
      <button aria-label="展开侧栏" className="absolute top-[163px] right-0">
        <svg viewBox="0 0 16 77" className="block h-[77px] w-4" aria-hidden="true">
          <path d="M16 0L2 4Q0 5 0 7v62q0 3 2 4l14 4z" fill="#4b4b4b" />
          <path d="M13 33l-5 5 5 5" fill="none" stroke="#aaa" />
        </svg>
      </button>
    </div>
  );
}

/* ---------- rebar editor ---------- */

function TriBtn({ d, c, label }: { d: string; c: string; label: string }) {
  return (
    <button aria-label={label}>
      <svg viewBox="0 0 14 16" className="block h-4 w-3.5" fill="none" stroke={c} strokeWidth="1.500" aria-hidden="true"><path d={d} /></svg>
    </button>
  );
}

const cols: [string, string][] = [
  ["筋号", "w-[91px]"], ["直径(mm)", "w-[70px]"], ["级别", "w-[45px]"], ["图号", "w-[41px]"], ["图形", "w-[270px]"], ["计算公式", ""], ["公式描述", "w-[195px]"],
  ["长度", "w-[76px]"], ["根数", "w-[48px]"], ["搭接", "w-[48px]"], ["损耗(%)", "w-[61px]"], ["单重(kg)", "w-[76px]"], ["总重(kg)", "w-[76px]"], ["钢筋归类", "w-[88px]"],
];

function RebarTable() {
  const num = "border-r border-[#d8e6e6] px-[3px] py-0 font-['Liberation_Mono','Noto_Sans_CJK_SC',monospace] text-xs text-black";
  const cjk = "border-r border-[#d8e6e6] px-[3px] py-0 text-black";
  return (
    <div className="flex min-h-0 flex-1 flex-col overflow-hidden">
      <table className="w-[calc(100%+10px)] table-fixed border-collapse border-t border-[#d8d8d8]">
        <colgroup>
          <col className="w-[9px]" />
          {cols.map(([t, w]) => <col key={t} className={w} />)}
        </colgroup>
        <thead>
          <tr className="h-[25px] text-[#333]">
            <th className="bg-[#f0f0f0]" aria-label="行号" />
            {cols.map(([t], i) => (
              <th key={t} scope="col" className={`border-r border-b border-[#dcdcdc] p-0 font-normal whitespace-nowrap ${i === 0 ? "bg-[#80b8fa] font-medium text-white" : ""}`}>{t}</th>
            ))}
          </tr>
        </thead>
        <tbody>
          <tr className="h-[57px] bg-[#c0dfe1]">
            <td className="bg-[#80b8fa] p-0 text-center font-bold text-white">1</td>
            <td className="border-r-2 border-b-2 border-[#8a8f8f] px-[3px] py-0 leading-[21px] text-black">筏板受力筋.<br />1</td>
            <td className={num}>10</td>
            <td className={`${num} pl-[5px]`}>
              <svg viewBox="0 0 12 14" className="h-3.5 w-3" fill="none" stroke="#000" strokeWidth="1.200" aria-label="三级钢">
                <path d="M6 1v12M2 4h8v5H2zM1 9.500h10M2 12.500h8" />
              </svg>
            </td>
            <td className={num}>1</td>
            <td className="border-r border-[#d8e6e6] py-0 pr-1 pl-[22px]">
              <div className="border-b-[3px] border-black pl-3 text-center font-['Liberation_Mono',monospace] text-sm leading-6 text-[#ff1010]">72900</div>
            </td>
            <td className={num}>72900</td>
            <td className={cjk}>净长+锚固+锚固</td>
            <td className={num}>72900</td>
            <td className={num}>38</td>
            <td className={num}>2700</td>
            <td className={num}>0</td>
            <td className={num}>46.645</td>
            <td className={num}>1772.51</td>
            <td className={cjk}>直筋</td>
          </tr>
          <tr className="h-[27px] border-b border-[#dcdcdc]">
            <td className="bg-[#f0f0f0] p-0 text-center text-[#555]">2</td>
            {cols.map(([t]) => <td key={t} className="border-r border-[#dcdcdc]" />)}
          </tr>
        </tbody>
      </table>
      <div className="w-[9px] flex-1 bg-[#f0f0f0]" />
    </div>
  );
}

function RebarPanel() {
  const btn = "flex items-center gap-[5px] text-[#222]";
  return (
    <section className="flex min-h-0 flex-1 flex-col border-t border-b border-l border-[#d8d8d8] bg-white">
      <div className="flex h-[35px] shrink-0 items-center bg-[#ededef] pl-[7px]">
        <Grip />
        <span className="ml-3 text-[#333]">编辑钢筋</span>
        <button aria-label="关闭编辑钢筋" className="mr-2.5 ml-auto"><CloseX /></button>
      </div>
      <div className="flex h-[33px] shrink-0 items-center pl-[9px] whitespace-nowrap">
        <div className="flex items-center gap-5">
          <TriBtn label="首行" c="#c4c4c4" d="M1 1v14M13 2v12L5 8z" />
          <TriBtn label="上一行" c="#c4c4c4" d="M11 2v12L3 8z" />
          <TriBtn label="下一行" c={BLUE} d="M3 2v12l8-6z" />
          <TriBtn label="末行" c={BLUE} d="M1 2v12l8-6zM13 1v14" />
          <button aria-label="上移"><Icon name="up" className="block size-[19px]" /></button>
          <button aria-label="下移" className="-ml-1"><Icon name="down" className="block size-[19px]" /></button>
        </div>
        <button className={`${btn} ml-4`}><Icon name="insert" sw={2.6} />插入</button>
        <button className={`${btn} ml-[15px]`}><Icon name="trash" sw={2.6} className="size-[19px]" />删除</button>
        <button className={`${btn} ml-[15px]`}><Icon name="scale" sw={2.6} />缩尺配筋</button>
        <button className={`${btn} ml-[15px]`}><Icon name="info" sw={2.6} />钢筋信息</button>
        <button className={`${btn} ml-[15px]`}><Icon name="library" sw={2.6} />钢筋图库</button>
        <button className="ml-[15px] flex items-center gap-2 text-[#222]">其他<Caret className="h-1 w-1.5" color="#999" /></button>
        <span className="ml-[13px] text-[#333]">单构件钢筋总重(kg)：1772.510</span>
      </div>
      <RebarTable />
      <div className="h-[15px] shrink-0 pt-1 pl-4">
        <div className="h-[5px] w-[74%] rounded-full bg-[#ebebeb]" />
      </div>
    </section>
  );
}

/* ---------- status and task bars ---------- */

const tools: { n: string; on?: boolean; caret?: boolean; ml: string; l: string }[] = [
  { n: "ortho", on: true, ml: "ml-0", l: "正交" },
  { n: "snap", on: true, caret: true, ml: "ml-1", l: "捕捉" },
  { n: "hourglass", on: true, ml: "ml-1", l: "计时" },
  { n: "cross", ml: "ml-[7px]", l: "交点" },
  { n: "angle", caret: true, ml: "ml-2", l: "角度" },
  { n: "dyn", caret: true, ml: "ml-1", l: "动态输入" },
  { n: "select3", ml: "ml-1", l: "选择模式" },
  { n: "poly", ml: "ml-1", l: "折线" },
];

function StatusBar() {
  return (
    <footer className="flex h-[39px] shrink-0 items-center overflow-hidden bg-[#fafafa] whitespace-nowrap text-[#333]">
      <div className="flex w-[560px] shrink-0">
        <span className="w-[110px]">层高：0.4</span>
        <span className="w-[175px]">标高：&nbsp;-10.15~-9.75</span>
        <span className="w-[138px]">选中图元：1(42)</span>
        <span>隐藏图元：0</span>
      </div>
      {tools.map((t) => (
        <button
          key={t.n}
          aria-label={t.l}
          className={`${t.ml} flex h-[31px] shrink-0 items-center justify-center gap-2 rounded border ${t.caret ? "w-[45px]" : "w-[31px]"} ${t.on ? "border-[#3b8bea] bg-[#d9e7fb]" : "border-[#a5a5a5] bg-white"}`}
        >
          <Icon name={t.n} className="size-5" sw={2.4} />
          {t.caret && <Caret className="h-1 w-1.5" />}
        </button>
      ))}
      <Icon name="expand" className="ml-5 size-[19px]" sw={3} />
      <span className="ml-[5px]">按鼠标左键指定第一个角点，或拾取构件图元</span>
      <a href="#" className="ml-auto flex items-center gap-2">
        <svg viewBox="0 0 18 18" className="size-[18px]" aria-hidden="true">
          <circle cx="9" cy="9" r="9" fill="#f68b28" />
          <path d="M9 4v6M9 12v2" stroke="#fff" strokeWidth="1.600" />
        </svg>
        合法性检查存在问题，请点击查看
      </a>
      <span className="mr-[10px] ml-4 flex items-center gap-2">
        <svg viewBox="0 0 18 18" className="size-[18px]" aria-hidden="true">
          <circle cx="9" cy="9" r="9" fill="#6cbb10" />
          <path d="M5 9l3 4 5-7" stroke="#fff" strokeWidth="1.300" fill="none" />
        </svg>
        实时计算已完成
      </span>
    </footer>
  );
}

function TaskBar() {
  return (
    <div className="flex h-4 shrink-0 items-start justify-between overflow-hidden bg-gradient-to-r from-[#d3e2e9] via-[#d9e3e8] to-[#cddde4]">
      <svg viewBox="0 0 1600 16" className="h-4 w-[1600px] shrink-0" aria-hidden="true">
        <path d="M61.500 13v3M64.500 13v3M1291 13v3M1294 13v3" stroke="#222" />
        <path d="M95 16v-3h9l4 3z" fill="#e0a010" />
        <path d="M160 16q2-5 11-5t12 5z" fill="#28b8d8" />
        <path d="M220 14l16-3v5h-12z" fill="#1e7a3a" />
        <path d="M236 14h9v2h-9z" fill="#4a9a4a" />
        <rect x="283" y="11" width="23" height="5" fill="#7a8a9a" />
        <rect x="286" y="13" width="17" height="3" fill="#50c8f0" />
        <rect x="404" y="11" width="30" height="5" fill="#f4f4f4" />
        <path d="M404 13h30" stroke="#999" />
        <rect x="466" y="11" width="29" height="10" rx="4" fill="#0be05a" />
        <rect x="528" y="11" width="30" height="5" fill="#f4b8b0" />
        <path d="M539 16l4-4 4 4z" fill="#c01818" />
        <path d="M589 16q3-5 8-5h15q5 0 8 5z" fill="#1b8cf0" />
        <path d="M598 16q6-6 13 0z" fill="#d8ecff" />
        <rect x="637" y="0" width="61" height="16" fill="#edf4f8" />
        <rect x="652" y="11" width="29" height="10" rx="4" fill="#1268f0" />
        <path d="M1340 16l4-3 6-1v4z" fill="#f07050" />
        <path d="M1496 11l7 5h-7z" fill="#f0a828" />
      </svg>
      <span className="mr-[90px] pt-1 text-[15px] leading-5 text-[#111]">22:20</span>
    </div>
  );
}

/* ---------- review marks drawn over the window ---------- */

function Markup() {
  return (
    <svg viewBox="0 0 1911 1040" preserveAspectRatio="xMinYMin meet" className="pointer-events-none absolute inset-0 h-full w-full font-['Noto_Sans_CJK_SC',sans-serif]" aria-label="批注">
      <g fill="none" stroke={RED} strokeWidth="5">
        <ellipse cx="1016" cy="427" rx="46" ry="181" />
        <ellipse cx="1626" cy="422" rx="41" ry="188" />
        <rect x="532" y="795" width="1354" height="24" />
        <rect x="531" y="827" width="1352" height="32" />
      </g>
      <g fill={RED}>
        <path d="M861 549L973 512l-3-8 38 3-28 22-1-8z" />
        <path d="M1125 644L1172 519l-9-3 24-25v35l-9-4z" />
        <path d="M1459 382l115 49 4-9 25 25-36-3 3-6z" />
        <path d="M742 930l32-132-6 0 22-27 2 35-8-3z" />
      </g>
      <g fill={RED} fontSize="30">
        <text x="769" y="557">后浇带</text>
        <text x="1364" y="399">后浇带</text>
        <text x="950" y="669">上皮附加筋</text>
        <text x="628" y="955">布置的上皮附加筋，如何自动在后浇带处断开，形成按后浇带的分段钢筋图形（比如分层三段，</text>
        <text x="628" y="995">总长度不变）</text>
      </g>
    </svg>
  );
}

export default function App() {
  return (
    <div className="relative flex h-screen w-full flex-col overflow-hidden bg-white font-['Noto_Sans','Noto_Sans_CJK_SC',sans-serif] text-[15px] leading-5">
      <TitleBar />
      <MenuRow />
      <Ribbon />
      <SelectorBar />
      <main className="flex min-h-0 flex-1 gap-1.5 bg-[#fafafa]">
        <NavPanel />
        <div className="flex w-[349px] shrink-0 flex-col gap-[5px]">
          <ComponentPanel />
          <PropertyPanel />
        </div>
        <div className="flex min-w-0 flex-1 flex-col gap-1.5">
          <div className="relative h-[403px] shrink-0 overflow-hidden">
            <Drawing />
            <ViewTools />
          </div>
          <RebarPanel />
        </div>
      </main>
      <StatusBar />
      <TaskBar />
      <Markup />
    </div>
  );
}
